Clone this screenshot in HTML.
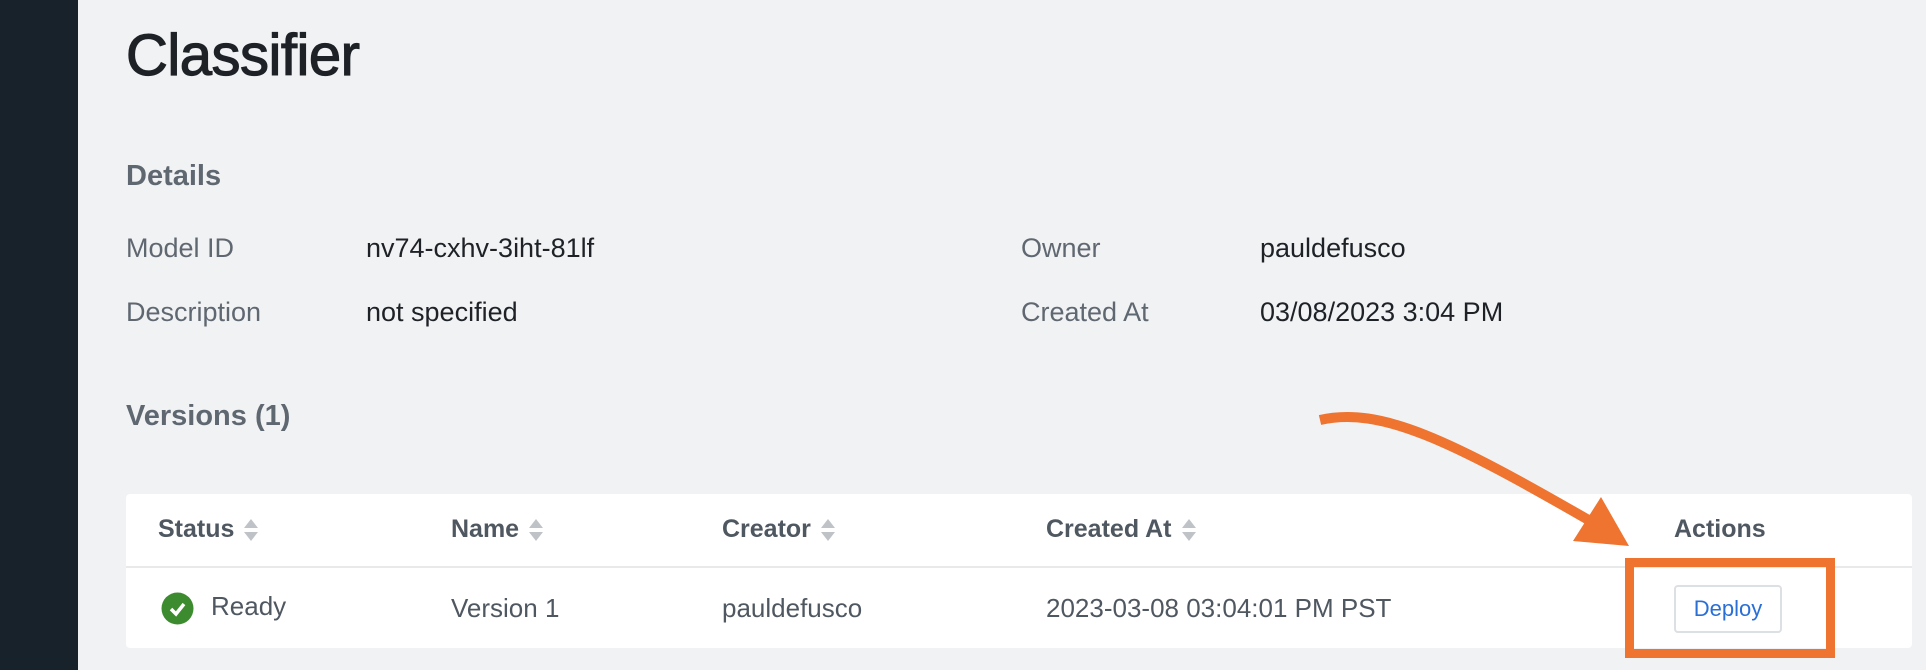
<!DOCTYPE html>
<html><head><meta charset="utf-8"><style>
body{margin:0;width:1926px;height:670px;background:#f1f2f4;font-family:"Liberation Sans",sans-serif;position:relative;overflow:hidden}
.sb{position:absolute;left:0;top:0;width:78px;height:670px;background:#18222a}
.a{position:absolute;white-space:nowrap}
.lbl{color:#5f6770;font-size:27px}
.val{color:#1e2227;font-size:27px}
.h{color:#5f6770;font-size:29px;font-weight:bold}
.card{position:absolute;left:126px;top:494px;width:1786px;height:154px;background:#fff;border-radius:4px}
.th{color:#4f5760;font-size:25px;font-weight:bold}
.td{color:#4f5760;font-size:26px}
.sort{display:inline-block;vertical-align:middle;margin-left:10px}
</style></head><body>
<div class="sb"></div>
<div class="a" style="left:126px;top:22px;font-size:58px;color:#1e2227;letter-spacing:-0.5px;-webkit-text-stroke:1.2px #1e2227">Classifier</div>
<div class="a h" style="left:126px;top:160px">Details</div>
<div class="a lbl" style="left:126px;top:233px">Model ID</div>
<div class="a val" style="left:366px;top:233px">nv74-cxhv-3iht-81lf</div>
<div class="a lbl" style="left:126px;top:297px">Description</div>
<div class="a val" style="left:366px;top:297px">not specified</div>
<div class="a lbl" style="left:1021px;top:233px">Owner</div>
<div class="a val" style="left:1260px;top:233px">pauldefusco</div>
<div class="a lbl" style="left:1021px;top:297px">Created At</div>
<div class="a val" style="left:1260px;top:297px">03/08/2023 3:04 PM</div>
<div class="a h" style="left:126px;top:400px">Versions (1)</div>
<div class="card">
<div style="position:absolute;left:0;right:0;top:72px;height:2px;background:#e8e9eb"></div>
</div>
<svg width="0" height="0" style="position:absolute"><defs><g id="s"><path d="M0 9 L7 0 L14 9Z" fill="#bfc3c8"/><path d="M0 13 L7 22 L14 13Z" fill="#bfc3c8"/></g></defs></svg>
<div class="a th" style="left:158px;top:515px">Status<svg class="sort" width="14" height="22"><use href="#s"/></svg></div>
<div class="a th" style="left:451px;top:515px">Name<svg class="sort" width="14" height="22"><use href="#s"/></svg></div>
<div class="a th" style="left:722px;top:515px">Creator<svg class="sort" width="14" height="22"><use href="#s"/></svg></div>
<div class="a th" style="left:1046px;top:515px">Created At<svg class="sort" width="14" height="22"><use href="#s"/></svg></div>
<div class="a th" style="left:1674px;top:515px">Actions</div>
<svg class="a" style="left:161px;top:592px" width="33" height="33"><circle cx="16.5" cy="16.5" r="16" fill="#3d8b2f"/><path d="M10 17 L15 22 L23 12" stroke="#fff" stroke-width="3.5" fill="none"/></svg>
<div class="a td" style="left:211px;top:591px">Ready</div>
<div class="a td" style="left:451px;top:593px">Version 1</div>
<div class="a td" style="left:722px;top:593px">pauldefusco</div>
<div class="a td" style="left:1046px;top:593px">2023-03-08 03:04:01 PM PST</div>
<div class="a" style="left:1674px;top:585px;width:104px;height:44px;border:2px solid #dcdfe3;border-radius:4px;color:#2a6fd6;font-size:22px;text-align:center;line-height:44px">Deploy</div>
<div class="a" style="left:1625px;top:558px;width:192px;height:82px;border:9px solid #ee7430"></div>
<svg class="a" style="left:0;top:0" width="1926" height="670"><path d="M1320 420 C1380 406,1450 440,1592 522" stroke="#ee7430" stroke-width="10" fill="none"/><path d="M1629 546 L1573 541 L1601 497Z" fill="#ee7430"/></svg>
</body></html>
